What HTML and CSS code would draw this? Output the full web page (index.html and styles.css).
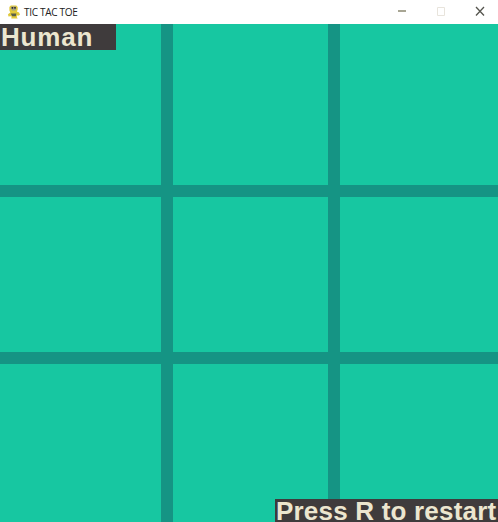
FILE: index.html
```html
<!DOCTYPE html>
<html lang="en">
<head>
  <meta charset="UTF-8">
  <title>TIC TAC TOE</title>
  <link rel="stylesheet" href="styles.css">
</head>
<body>
  <!-- Window title bar -->
  <div class="titlebar">
    <svg class="app-icon" width="12" height="14" viewBox="0 0 13 15">
      <path d="M3 0.5h6l1.500 1.500v3L9.500 7l2.500 1 1 2.500-2 1-1-.5-.5 2 1 1.500H3.500l.5-2-1.500-.5-2 .5L0 10l2.500-2L1.500 6V2z" fill="#e0c93a"/>
      <path d="M3.500 1.500h5l.5 2-1 2.500H4.500L3 3.500z" fill="#a3a183"/>
      <path d="M3 9h6l-.5 3h-4z" fill="#5a6048"/>
      <circle cx="4.800" cy="3" r="1" fill="#222"/>
      <circle cx="7.600" cy="3" r="1" fill="#222"/>
    </svg>
    <span class="title">TIC TAC TOE</span>
    <div class="controls">
      <svg class="ctl" width="39" height="24" viewBox="0 0 39 24"><path d="M15 11h8" stroke="#a8a694" stroke-width="2"/></svg>
      <svg class="ctl" width="39" height="24" viewBox="0 0 39 24"><path d="M15.500 7.500h7v8h-7z" fill="none" stroke="#e8e4dc"/></svg>
      <svg class="ctl ctl-close" width="37" height="24" viewBox="0 0 37 24"><path d="M15 7l8 8.500M23 7l-8 8.500" stroke="#55554e" stroke-width="1.300"/></svg>
    </div>
  </div>

  <!-- Board -->
  <div class="board">
    <div class="cell"></div><div class="cell"></div><div class="cell"></div>
    <div class="cell"></div><div class="cell"></div><div class="cell"></div>
    <div class="cell"></div><div class="cell"></div><div class="cell"></div>
    <div class="label label-player">Human</div>
    <div class="label label-restart">Press R to restart</div>
  </div>
</body>
</html>
```

FILE: styles.css
```css
html, body {
  margin: 0;
  padding: 0;
}
body {
  width: 498px;
  height: 522px;
  overflow: hidden;
  background-color: #fff;
}
.titlebar {
  display: flex;
  align-items: center;
  height: 24px;
  padding-left: 8px;
  background-color: #fff;
}
.app-icon {
  margin-right: 4px;
}
.title {
  font-family: "Open Sans", sans-serif;
  font-size: 10px;
  letter-spacing: -0.3px;
  color: #222;
}
.controls {
  display: flex;
  margin-left: auto;
}
.ctl {
  display: block;
}
.board {
  position: relative;
  display: grid;
  grid-template-columns: 161px 155px 158px;
  grid-template-rows: 161px 155px 158px;
  gap: 12px;
  height: 498px;
  background-color: #159484;
}
.cell {
  background-color: #17c7a1;
}
.label {
  position: absolute;
  font-family: "Liberation Sans", sans-serif;
  font-weight: bold;
  font-size: 26px;
  white-space: nowrap;
  color: #ece6cf;
  background-color: #3f3b3c;
}
.label-player {
  top: 0;
  left: 0;
  width: 115px;
  height: 26px;
  padding-left: 1px;
  line-height: 26px;
  letter-spacing: 0.8px;
}
.label-restart {
  right: 0;
  bottom: 0;
  width: 222px;
  height: 23px;
  padding-left: 1px;
  line-height: 24px;
  letter-spacing: 0.2px;
}
```
